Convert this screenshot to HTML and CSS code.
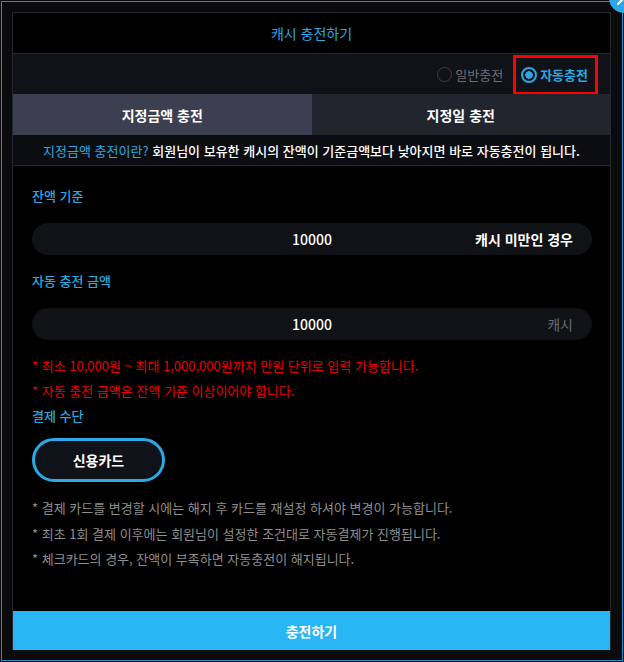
FILE: index.html
```html
<!DOCTYPE html>
<html lang="ko">
<head>
  <meta charset="UTF-8">
  <meta name="viewport" content="width=device-width, initial-scale=1.0">
  <title>캐시 충전하기</title>
  <link rel="stylesheet" href="styles.css">
</head>
<body>

<div class="frame">
  <div class="panel">
    <header class="title">캐시 충전하기</header>

    <div class="mode-row">
      <label class="mode">
        <span class="radio"></span>일반충전
      </label>
      <label class="mode mode-on">
        <span class="radio"></span>자동충전
      </label>
    </div>

    <div class="tabs">
      <div class="tab tab-on">지정금액 충전</div>
      <div class="tab">지정일 충전</div>
    </div>

    <p class="info"><span class="info-key">지정금액 충전이란?</span> 회원님이 보유한 캐시의 잔액이 기준금액보다 낮아지면 바로 자동충전이 됩니다.</p>

    <div class="content">
      <div class="label">잔액 기준</div>
      <div class="field">
        <span class="value">10000</span>
        <span class="suffix suffix-strong">캐시 미만인 경우</span>
      </div>

      <div class="label">자동 충전 금액</div>
      <div class="field">
        <span class="value">10000</span>
        <span class="suffix">캐시</span>
      </div>

      <ul class="notes notes-red">
        <li>* 최소 10,000원 ~ 최대 1,000,000원까지 만원 단위로 입력 가능합니다.</li>
        <li>* 자동 충전 금액은 잔액 기준 이상이어야 합니다.</li>
      </ul>

      <div class="label label-pay">결제 수단</div>
      <button class="card-btn">신용카드</button>

      <ul class="notes notes-gray">
        <li>* 결제 카드를 변경할 시에는 해지 후 카드를 재설정 하셔야 변경이 가능합니다.</li>
        <li>* 최초 1회 결제 이후에는 회원님이 설정한 조건대로 자동결제가 진행됩니다.</li>
        <li>* 체크카드의 경우, 잔액이 부족하면 자동충전이 해지됩니다.</li>
      </ul>
    </div>

    <button class="submit">충전하기</button>
  </div>
</div>

<div class="edit-badge">
  <svg width="30" height="30" viewBox="0 0 30 30">
    <circle cx="15" cy="15" r="15" fill="#2aa9e6"/>
    <path d="M9 21 L20 10" stroke="#fff" stroke-width="2" stroke-linecap="round"/>
  </svg>
</div>

</body>
</html>
```

FILE: styles.css
```css
* {
  box-sizing: border-box;
}
body {
  margin: 0;
  padding: 1px;
  background-color: #0b0b0d;
  font-family: "Noto Sans CJK KR", "Noto Sans", sans-serif;
  color: #fff;
  overflow: hidden;
}
.frame {
  width: 622px;
  height: 660px;
  border: 1px solid #2b8ec2;
  padding: 10px 11px 10px 10px;
}
.panel {
  height: 638px;
  display: flex;
  flex-direction: column;
  background-color: #000;
  border: 1px solid #25272e;
  border-bottom: none;
}
.title {
  height: 41px;
  display: flex;
  align-items: center;
  justify-content: center;
  font-size: 14px;
  color: #2aa8e0;
  border-bottom: 1px solid #25272e;
}
.mode-row {
  height: 40px;
  display: flex;
  justify-content: flex-end;
  align-items: center;
  padding: 1px 12px 0 0;
  background-color: #101218;
}
.mode {
  display: flex;
  align-items: center;
  gap: 3px;
  font-size: 13px;
  color: #6c6f77;
  height: 40px;
  margin-right: 10px;
}
.radio {
  width: 15px;
  height: 15px;
  border-radius: 50%;
  border: 1.5px solid #3e4149;
}
.mode-on {
  color: #2aa8e0;
  font-weight: bold;
  border: 3px solid #f00;
  padding: 0 7px 0 5px;
  margin-right: 0;
}
.mode-on .radio {
  width: 16px;
  height: 16px;
  border: 2px solid #2aa8e0;
  background: radial-gradient(circle, #2aa8e0 0 3.5px, transparent 4px);
}
.tabs {
  display: flex;
  height: 41px;
}
.tab {
  flex: 1;
  display: flex;
  align-items: center;
  justify-content: center;
  font-size: 14px;
  font-weight: bold;
  background-color: #22252e;
}
.tab-on {
  background-color: #3b3f50;
}
.info {
  margin: 0;
  height: 31px;
  display: flex;
  align-items: center;
  justify-content: center;
  font-size: 13px;
  font-weight: 500;
  background-color: #0c0d11;
  border-bottom: 1px solid #25272e;
  white-space: pre;
}
.info-key {
  color: #2aa8e0;
  font-weight: normal;
}
.content {
  flex: 1;
  padding: 21px 18px 0 19px;
}
.label {
  font-size: 13px;
  line-height: 18px;
  color: #2aa8e0;
  font-weight: 500;
}
.field + .label {
  margin-top: 17px;
}
.field {
  display: flex;
  align-items: center;
  justify-content: space-between;
  position: relative;
  height: 32px;
  margin-top: 18px;
  padding: 0 19px;
  border-radius: 16px;
  background-color: #111216;
}
.value {
  position: absolute;
  left: 50%;
  transform: translateX(-50%);
  font-size: 14px;
  font-weight: 500;
}
.suffix {
  margin-left: auto;
  font-size: 14px;
  color: #6a6b70;
}
.suffix-strong {
  color: #fff;
  font-weight: bold;
}
.notes {
  list-style: none;
  margin: 0;
  padding: 0;
  font-size: 13px;
  line-height: 25px;
}
.notes-red {
  margin-top: 13px;
  color: #e80000;
}
.label-pay {
  margin-top: 4px;
}
.card-btn {
  display: block;
  width: 133px;
  height: 44px;
  margin: 13px 0 13px;
  border: 3px solid #2aa9e6;
  border-radius: 22px;
  background-color: #10121a;
  color: #fff;
  font-family: inherit;
  font-size: 14px;
  font-weight: bold;
}
.notes-gray {
  color: #8e8e8e;
  line-height: 25.5px;
}
.submit {
  height: 39px;
  width: 100%;
  border: none;
  background-color: #29b6f4;
  color: #fff;
  font-family: inherit;
  font-size: 14px;
  font-weight: bold;
}
.edit-badge {
  position: absolute;
  top: -17px;
  left: 609px;
}
```
